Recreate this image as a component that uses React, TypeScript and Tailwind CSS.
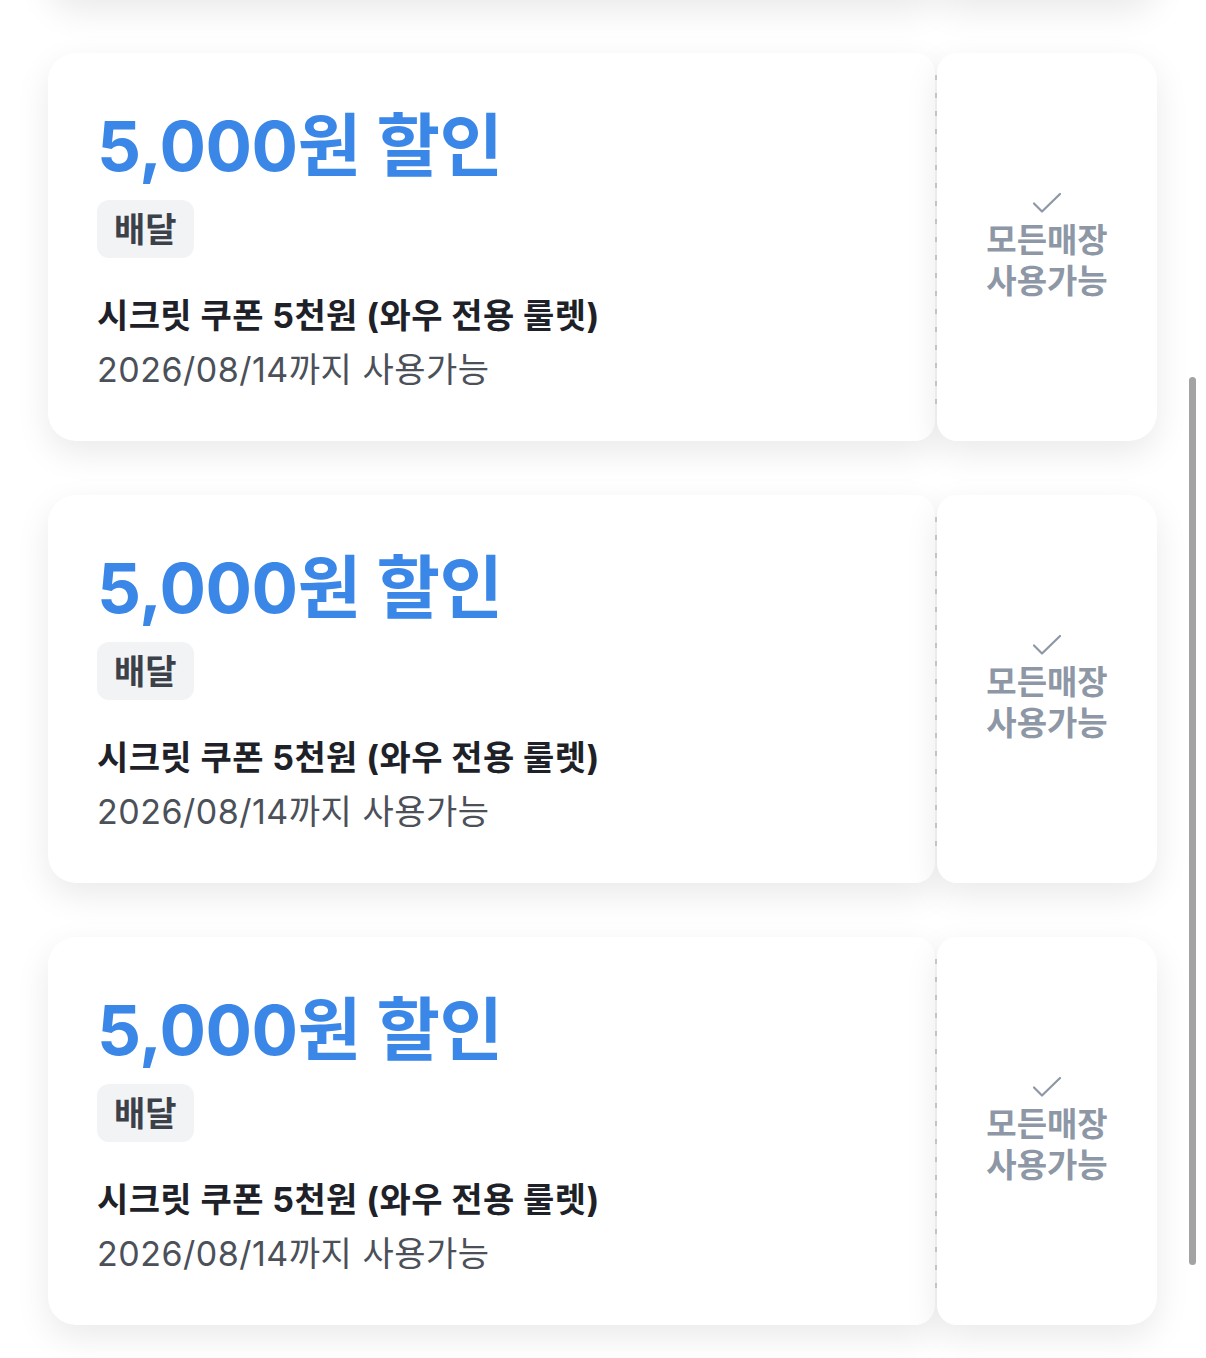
import React from "react";

function Coupon({ empty = false }: { empty?: boolean }) {
  return (
    <div className="flex h-[388px] w-full">
      {/* main body */}
      <div className="flex-1 bg-white rounded-l-[28px] rounded-r-[20px] shadow-[0_12px_34px_rgba(0,0,0,0.085)] pl-[49px] pt-[53px]">
        {!empty && (
          <>
            <div className="text-[69px] leading-[80px] font-bold tracking-[-0.5px] text-[#3a87e8]">
              5,000원 할인
            </div>
            <div className="mt-[14px] inline-flex h-[58px] items-center rounded-[12px] bg-[#f2f3f5] px-[17px] text-[34px] font-bold text-[#3c4149]">
              배달
            </div>
            <div className="mt-[38px] text-[34px] leading-[40px] font-bold tracking-[0.4px] text-[#1e2228]">
              시크릿 쿠폰 5천원 (와우 전용 룰렛)
            </div>
            <div className="mt-[14px] text-[34px] leading-[40px] tracking-[0.5px] text-[#4b5059]">
              2026/08/14까지 사용가능
            </div>
          </>
        )}
      </div>

      {/* perforation */}
      <div className="flex w-[2px] flex-col items-center py-[22px]">
        <svg width="2" height="340" viewBox="0 0 2 340">
          <line x1="1" y1="0" x2="1" y2="340" stroke="#cccccc" strokeWidth="2" strokeDasharray="5 13" />
        </svg>
      </div>

      {/* stub */}
      <div className="flex w-[220px] flex-col items-center justify-center rounded-l-[20px] rounded-r-[28px] bg-white shadow-[0_12px_34px_rgba(0,0,0,0.085)] text-[#8d97a5]">
        {!empty && (
          <>
            <svg width="30" height="22" viewBox="0 0 30 22" fill="none" stroke="currentColor" strokeWidth="2.2" strokeLinecap="round" strokeLinejoin="round">
              <path d="M2 11.5 10 19.5 28 2" />
            </svg>
            <div className="mt-[6px] text-center text-[33px] leading-[41px] font-semibold">
              모든매장
              <br />
              사용가능
            </div>
          </>
        )}
      </div>
    </div>
  );
}

export default function App() {
  return (
    <div
      className="relative h-[1358px] overflow-hidden bg-white"
      style={{ fontFamily: "Inter, 'Noto Sans CJK KR', sans-serif" }}
    >
      <div className="-mt-[389px] flex flex-col gap-[54px] pl-[48px] pr-[49px]">
        <Coupon empty />
        <Coupon />
        <Coupon />
        <Coupon />
      </div>

      {/* overlay scrollbar */}
      <div className="absolute left-[1189px] top-[377px] h-[888px] w-[7px] rounded-full bg-[#a3a3a3]" />
    </div>
  );
}
